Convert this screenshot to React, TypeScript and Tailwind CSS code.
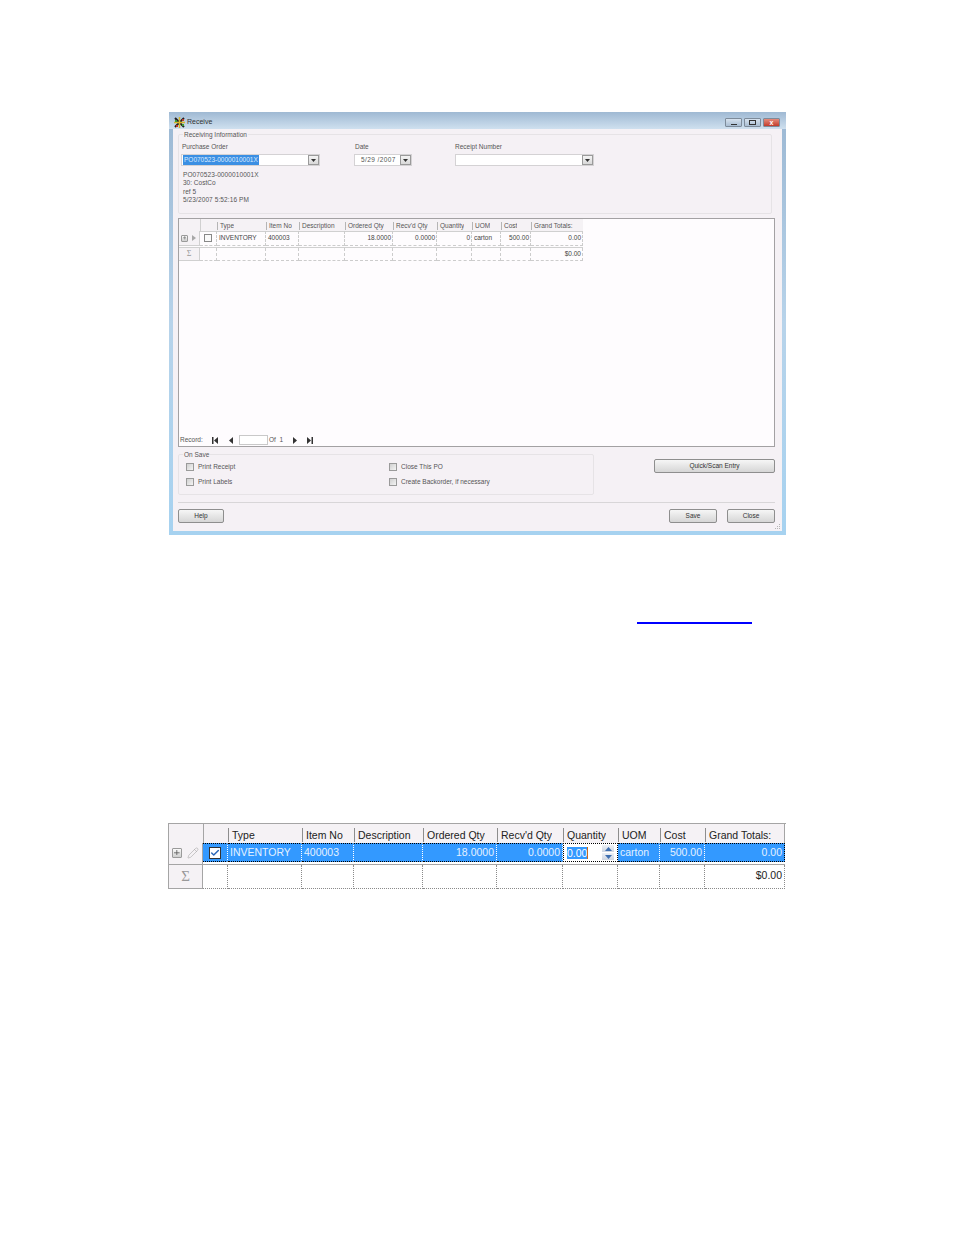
import React from 'react';
import { Pencil, Check } from 'lucide-react';

const smallCols = 'grid grid-cols-[21px_17px_49px_33px_46px_48px_44px_35px_29px_30px_52px] w-[404px]';
const largeCols = 'grid grid-cols-[35px_25px_74px_52px_69px_74px_66px_55px_42px_45px_80px] w-[617px]';

const headers = ['Type', 'Item No', 'Description', 'Ordered Qty', "Recv'd Qty", 'Quantity', 'UOM', 'Cost', 'Grand Totals:'];

function DownArrow() {
  return (
    <svg width="5" height="3" viewBox="0 0 5 3">
      <path d="M0 0h5L2.500 3z" fill="#333" />
    </svg>
  );
}

function Combo({ width, children }: { width: string; children?: React.ReactNode }) {
  return (
    <div className={`flex h-[12px] items-stretch border border-[#d4d2d4] bg-white ${width}`}>
      <div className="flex min-w-0 flex-1 items-center">{children}</div>
      <div className="flex w-[11px] items-center justify-center border border-[#9a9a9a] bg-gradient-to-b from-[#f4f4f4] to-[#d8d8d8]">
        <DownArrow />
      </div>
    </div>
  );
}

function Group({ title, className, children }: { title: string; className: string; children: React.ReactNode }) {
  return (
    <fieldset className={`rounded-[2px] border border-[#e6e3e6] ${className}`}>
      <legend className="ml-[4px] px-[1px] pt-px text-[6.500px] leading-[10px] text-[#555]">{title}</legend>
      {children}
    </fieldset>
  );
}

function Button({ width, label }: { width: string; label: string }) {
  return (
    <button className={`flex h-[14px] items-center justify-center rounded-[2px] border border-[#8e8e8e] bg-gradient-to-b from-[#f6f6f6] to-[#d6d6d6] text-[6.500px] text-[#333] ${width}`}>
      {label}
    </button>
  );
}

function TinyCheck({ label }: { label: string }) {
  return (
    <div className="flex h-[8px] items-center">
      <div className="mr-[4px] h-[8px] w-[8px] border border-[#9a9a9a] bg-gradient-to-br from-[#d0d0d0] to-[#f4f4f4]" />
      <span className="whitespace-nowrap text-[6.500px] text-[#555]">{label}</span>
    </div>
  );
}

function Nav({ d }: { d: string }) {
  return (
    <svg width="6" height="7" viewBox="0 0 6 7">
      <path d={d} fill="#333" />
    </svg>
  );
}

function WinButton({ className, children }: { className: string; children: React.ReactNode }) {
  return (
    <div className={`flex h-[9px] w-[17px] items-center justify-center rounded-[1px] border border-[#7d8b9a] ${className}`}>
      {children}
    </div>
  );
}

function AppIcon() {
  return (
    <svg width="11" height="11" viewBox="0 0 11 11" className="mr-[2px]">
      <path d="M1 1l9 9M10 1l-9 9" stroke="#222" strokeWidth="2" />
      <path d="M5.500 0v11M0 5.500h11" stroke="#d7b52a" strokeWidth="1.500" />
      <path d="M1 3h2v2H1zM8 7h2v2H8z" fill="#3a9a3a" />
      <path d="M8 2h2v2H8zM2 8h2v2H2z" fill="#c0392b" />
    </svg>
  );
}

function PlusBox({ size }: { size: string }) {
  return (
    <div className={`flex items-center justify-center rounded-[1px] border border-[#9a9a9a] bg-gradient-to-b from-[#fafafa] to-[#cfcfcf] ${size}`}>
      <svg viewBox="0 0 7 7" className="h-[70%] w-[70%]">
        <path d="M0 3.500h7M3.500 0v7" stroke="#555" strokeWidth="1" />
      </svg>
    </div>
  );
}

function SmallHeaderCell({ label }: { label: string }) {
  return (
    <div className="flex items-center border-b border-[#d0d0d0] pt-[2px]">
      <div className="h-[8px] w-px bg-[#b5b5b5]" />
      <span className="overflow-hidden whitespace-nowrap pl-[2px] text-[6.500px] text-[#555]">{label}</span>
    </div>
  );
}

function SmallCell({ text, right }: { text?: string; right?: boolean }) {
  return (
    <div className={`flex items-center overflow-hidden whitespace-nowrap border-r border-b border-dashed border-[#cccccc] px-[1px] text-[6.500px] text-[#444] ${right ? 'justify-end' : 'pl-[2px]'}`}>
      {text}
    </div>
  );
}

function SmallGrid() {
  return (
    <div className="flex h-[229px] w-[597px] flex-col border border-[#a3a1a3] bg-[#fefcfe]">
      <div className={`${smallCols} h-[12px] bg-[#f5f2f5]`}>
        <div className="border-b border-[#d0d0d0]" />
        <div className="border-b border-l border-[#d0d0d0]" />
        {headers.map((h) => (
          <SmallHeaderCell key={h} label={h} />
        ))}
      </div>
      <div className={`${smallCols} h-[15px]`}>
        <div className="flex items-center gap-[4px] border-r border-b border-[#d0d0d0] bg-[#f5f2f5] pl-[2px]">
          <PlusBox size="h-[7px] w-[7px]" />
          <svg width="4" height="6" viewBox="0 0 4 6">
            <path d="M0 0l4 3-4 3z" fill="#a8a8a8" />
          </svg>
        </div>
        <div className="flex items-center justify-center border-r border-b border-dashed border-[#cccccc]">
          <div className="h-[8px] w-[8px] border border-[#888] bg-[#fafafa]" />
        </div>
        <SmallCell text="INVENTORY" />
        <SmallCell text="400003" />
        <SmallCell />
        <SmallCell text="18.0000" right />
        <SmallCell text="0.0000" right />
        <SmallCell text="0" right />
        <SmallCell text="carton" />
        <SmallCell text="500.00" right />
        <SmallCell text="0.00" right />
      </div>
      <div className={`${smallCols} mt-px h-[12px] border-t border-[#d0d0d0]`}>
        <div className="flex items-center justify-center border-r border-b border-[#d0d0d0] bg-[#f5f2f5] font-['Liberation_Serif',serif] text-[8px] text-[#999]">Σ</div>
        <SmallCell />
        <SmallCell />
        <SmallCell />
        <SmallCell />
        <SmallCell />
        <SmallCell />
        <SmallCell />
        <SmallCell />
        <SmallCell />
        <SmallCell text="$0.00" right />
      </div>
      <div className="flex-1" />
      <div className="flex h-[12px] items-center pl-[1px] text-[6.500px] text-[#555]">
        <span className="w-[32px]">Record:</span>
        <Nav d="M0 0h1.500v7H0zM6 0v7L2 3.500z" />
        <div className="w-[10px]" />
        <Nav d="M5 0v7L1 3.500z" />
        <div className="w-[5px]" />
        <div className="h-[10px] w-[29px] border border-[#c9c9c9] bg-white" />
        <span className="ml-[1px] w-[23px]">Of&nbsp;&nbsp;1</span>
        <Nav d="M1 0v7l4-3.500z" />
        <div className="w-[9px]" />
        <Nav d="M0 0v7l4-3.500zM4.500 0H6v7H4.500z" />
      </div>
    </div>
  );
}

function LargeHeaderCell({ label }: { label: string }) {
  return (
    <div className="flex items-center border-b border-[#a5a5a5] pt-[2px]">
      <div className="h-[14px] w-px bg-[#8e8e8e]" />
      <span className="overflow-hidden whitespace-nowrap pl-[3px] pt-[2px] text-[10.500px] text-[#222]">{label}</span>
    </div>
  );
}

function RowCell({ text, right, last }: { text: string; right?: boolean; last?: boolean }) {
  return (
    <div className={`flex items-center overflow-hidden whitespace-nowrap border-y border-r border-dotted border-y-black bg-[#3399ff] text-[10.500px] text-[#e4f1ff] ${last ? 'border-r-black' : 'border-r-white'} ${right ? 'justify-end pr-[2px]' : 'pl-[2px]'}`}>
      {text}
    </div>
  );
}

function SumCell({ text }: { text?: string }) {
  return (
    <div className="flex items-center justify-end border-r border-b border-dotted border-[#8a8a8a] pr-[2px] text-[10.500px] text-[#222]">
      {text}
    </div>
  );
}

function LargeGrid() {
  return (
    <div className="mt-[199px] w-[618px] border-t border-[#a5a5a5]">
      <div className={`${largeCols} h-[19px] border-r border-[#a5a5a5] bg-[#f5f2f5]`}>
        <div className="border-b border-l border-[#a5a5a5]" />
        <div className="border-b border-l border-[#a5a5a5]" />
        {headers.map((h) => (
          <LargeHeaderCell key={h} label={h} />
        ))}
      </div>
      <div className={`${largeCols} h-[19px]`}>
        <div className="flex items-center gap-[5px] border-x border-[#a5a5a5] bg-[#f5f2f5] pl-[3px]">
          <PlusBox size="h-[10px] w-[10px]" />
          <Pencil size={12} strokeWidth={1} className="text-[#999]" />
        </div>
        <div className="flex items-center justify-center border-y border-r border-dotted border-y-black border-r-white bg-[#3399ff]">
          <div className="flex h-[12px] w-[12px] items-center justify-center border border-[#333] bg-white">
            <Check size={10} strokeWidth={3.500} className="text-[#2a66b8]" />
          </div>
        </div>
        <RowCell text="INVENTORY" />
        <RowCell text="400003" />
        <RowCell text="" />
        <RowCell text="18.0000" right />
        <RowCell text="0.0000" right />
        <div className="flex items-center border border-dotted border-black bg-white px-[3px]">
          <span className="bg-[#3399ff] text-[10.500px] leading-[12px] text-white">0.00</span>
          <div className="h-[12px] w-px bg-[#c96a1c]" />
          <div className="ml-auto flex h-[15px] w-[12px] flex-col gap-px">
            <div className="flex flex-1 items-center justify-center bg-gradient-to-b from-[#eef1f6] to-[#cdd5e2]">
              <svg width="7" height="4" viewBox="0 0 7 4"><path d="M0 4l3.500-4L7 4z" fill="#3f6fb0" /></svg>
            </div>
            <div className="flex flex-1 items-center justify-center bg-gradient-to-b from-[#eef1f6] to-[#cdd5e2]">
              <svg width="7" height="4" viewBox="0 0 7 4"><path d="M0 0l3.500 4L7 0z" fill="#3f6fb0" /></svg>
            </div>
          </div>
        </div>
        <RowCell text="carton" />
        <RowCell text="500.00" right />
        <RowCell text="0.00" right last />
      </div>
      <div className={`${largeCols} h-[3px] border-b border-[#a5a5a5]`}>
        <div className="border-x border-[#a5a5a5] bg-[#f5f2f5]" />
      </div>
      <div className={`${largeCols} h-[20px]`}>
        <div className="flex items-center justify-center border-x border-b border-[#a5a5a5] bg-[#f5f2f5] font-['Liberation_Serif',serif] text-[15px] text-[#999]">Σ</div>
        <SumCell />
        <SumCell />
        <SumCell />
        <SumCell />
        <SumCell />
        <SumCell />
        <SumCell />
        <SumCell />
        <SumCell />
        <SumCell text="$0.00" />
      </div>
    </div>
  );
}

export default function App() {
  return (
    <div className="h-[1235px] w-[954px] overflow-hidden bg-white pl-[168px] pt-[112px] font-['Liberation_Sans',Arial,sans-serif]">
      <div className="ml-px flex w-[617px] flex-col bg-gradient-to-b from-[#9cb8d3] via-[#b7d3ea] to-[#a6d2f0] pb-[4px]">
        <div className="flex h-[17px] items-center bg-gradient-to-b from-[#9fb9d3] to-[#cfe0ef] pl-[5px] pr-[6px] pt-[4px]">
          <AppIcon />
          <span className="text-[7px] text-[#333]">Receive</span>
          <div className="ml-auto flex gap-[2px]">
            <WinButton className="bg-gradient-to-b from-[#d6e2ee] to-[#a9bdd2]">
              <div className="mt-[3px] h-px w-[6px] bg-[#333]" />
            </WinButton>
            <WinButton className="bg-gradient-to-b from-[#d6e2ee] to-[#a9bdd2]">
              <div className="h-[5px] w-[7px] border border-[#333]" />
            </WinButton>
            <WinButton className="bg-gradient-to-b from-[#e48a7c] to-[#c23a2b]">
              <span className="text-[7px] font-bold leading-none text-white">x</span>
            </WinButton>
          </div>
        </div>
        <div className="relative mx-[4px] h-[402px] bg-[#f5f1f5] pl-[5px]">
          <Group title="Receiving Information" className="h-[85px] w-[594px]">
            <div className="flex pl-[2px] pt-[2px]">
              <div className="mr-[34px] flex flex-col">
                <span className="mb-[3px] pl-px text-[6.500px] leading-[9px] text-[#555]">Purchase Order</span>
                <Combo width="w-[139px]">
                  <span className="ml-px bg-[#3b8fe3] px-px text-[6.500px] leading-[10px] text-[#dcecff]">PO070523-0000010001X</span>
                </Combo>
              </div>
              <div className="mr-[43px] flex flex-col">
                <span className="mb-[3px] pl-px text-[6.500px] leading-[9px] text-[#555]">Date</span>
                <Combo width="w-[58px]">
                  <span className="whitespace-pre pl-[6px] text-[6.500px] tracking-[0.4px] text-[#555]">5/29 /2007</span>
                </Combo>
              </div>
              <div className="flex flex-col">
                <span className="mb-[3px] text-[6.500px] leading-[9px] text-[#555]">Receipt Number</span>
                <Combo width="w-[139px]" />
              </div>
            </div>
            <div className="mt-[5px] pl-[4px] text-[6.500px] leading-[8.300px] text-[#555]">
              <div className="tracking-[0.1px]">PO070523-0000010001X</div>
              <div>30: CostCo</div>
              <div>ref 5</div>
              <div className="tracking-[0.1px]">5/23/2007 5:52:16 PM</div>
            </div>
          </Group>
          <div className="mt-[4px]">
            <SmallGrid />
          </div>
          <div className="mt-[2px] flex items-start">
            <Group title="On Save" className="h-[46px] w-[416px]">
              <div className="grid grid-cols-[203px_1fr] gap-y-[7px] pl-[7px] pt-[3px]">
                <TinyCheck label="Print Receipt" />
                <TinyCheck label="Close This PO" />
                <TinyCheck label="Print Labels" />
                <TinyCheck label="Create Backorder, if necessary" />
              </div>
            </Group>
            <div className="ml-[60px] mt-[10px]">
              <Button width="w-[121px]" label="Quick/Scan Entry" />
            </div>
          </div>
          <div className="mt-[7px] h-px w-[597px] bg-[#d8d6d8]" />
          <div className="mt-[6px] flex w-[597px] items-start">
            <Button width="w-[46px]" label="Help" />
            <div className="ml-auto flex gap-[10px]">
              <Button width="w-[48px]" label="Save" />
              <Button width="w-[48px]" label="Close" />
            </div>
          </div>
          <svg width="6" height="6" viewBox="0 0 6 6" className="absolute bottom-[1px] right-[1px]">
            <path d="M4 0h1v1H4zM2 2h1v1H2zM4 2h1v1H4zM0 4h1v1H0zM2 4h1v1H2zM4 4h1v1H4z" fill="#b5b5b5" />
          </svg>
        </div>
      </div>
      <div className="ml-[469px] mt-[87px] h-[2px] w-[115px] bg-[#0000ff]" />
      <LargeGrid />
    </div>
  );
}
